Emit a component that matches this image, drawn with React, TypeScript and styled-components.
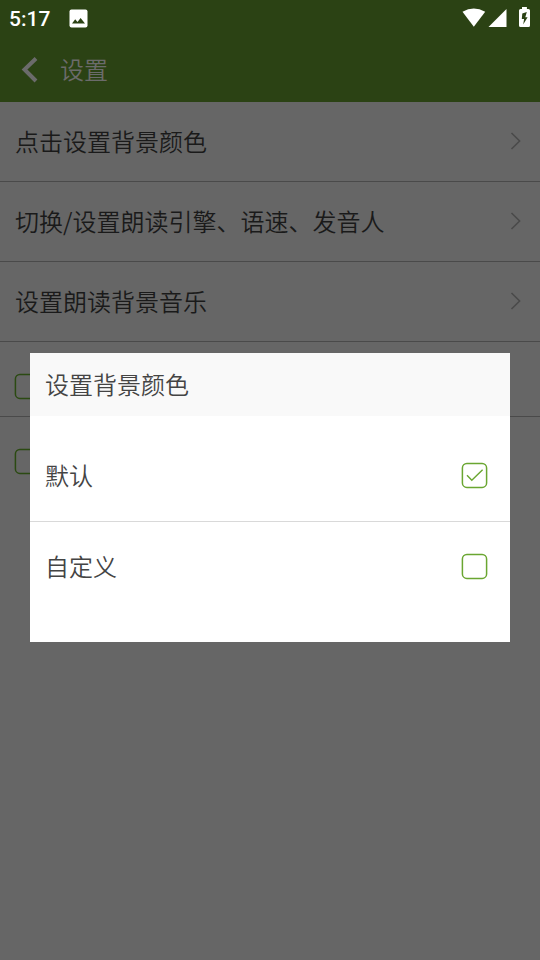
import React from "react";
import styled, { createGlobalStyle } from "styled-components";

const GlobalStyle = createGlobalStyle`
  * { box-sizing: border-box; }
  html, body { margin: 0; background: #666666; }
  body { font-family: "Noto Sans CJK SC DemiLight", "Noto Sans CJK SC", sans-serif; font-weight: 350; font-size: 24px; line-height: 36px; overflow: hidden; }
  svg { display: block; flex: none; }
`;

const Screen = styled.div`
  width: 540px;
  height: 960px;
  background: #666666;
`;

const TopBar = styled.header`
  height: 102px;
  background: #2b4214;
`;

const StatusBar = styled.div`
  height: 38px;
  padding: 0 9px 0 9px;
  display: flex;
  align-items: center;
  color: #ffffff;
`;

const Clock = styled.span`
  width: 60px;
  font-family: Roboto, sans-serif;
  font-size: 21px;
  font-weight: 500;
  line-height: 38px;
`;

const StatusIcons = styled.div`
  margin-left: auto;
  display: flex;
  align-items: center;
  height: 36px;
  align-self: flex-start;
`;

const PictureIcon = styled.svg`
  margin-bottom: 1px;
`;

const TitleBar = styled.div`
  height: 64px;
  padding-left: 21px;
  display: flex;
  align-items: center;
  gap: 21px;
  color: #6b6b6b;
`;

const Label = styled.span`
  padding-bottom: 2px;
`;

const Title = styled(Label)`
  padding-bottom: 3px;
`;

const SettingRow = styled.div<{ $height: number; $last?: boolean }>`
  height: ${(p) => p.$height}px;
  padding: 0 18px 0 15px;
  border-bottom: ${(p) => (p.$last ? "none" : "1px solid #4a4a4a")};
  display: flex;
  align-items: center;
  justify-content: space-between;
  color: #1a1a1a;
`;

const CheckRow = styled(SettingRow)`
  align-items: flex-start;
  padding-top: ${(p) => p.$height - 44}px;
  padding-left: 14px;
`;

const Chevron = styled.svg`
  margin-bottom: 1px;
`;

const Backdrop = styled.div`
  position: fixed;
  top: 353px;
  left: 0;
  width: 540px;
  padding: 0 30px;
`;

const Dialog = styled.section`
  height: 289px;
  background: #ffffff;
  color: #444444;
`;

const DialogTitle = styled.div`
  height: 63px;
  padding: 0 15px 0 15px;
  display: flex;
  align-items: center;
  background: #f9f9f9;
`;

const OptionList = styled.div`
  padding-top: 14px;
`;

const Option = styled.div<{ $divided?: boolean }>`
  height: ${(p) => (p.$divided ? 92 : 89)}px;
  padding: 0 22px 0 15px;
  border-bottom: ${(p) => (p.$divided ? "1px solid #d9d9d9" : "none")};
  display: flex;
  align-items: center;
  justify-content: space-between;
`;

const CheckBox = ({ checked, color }: { checked?: boolean; color: string }) => (
  <svg width="27" height="27" viewBox="0 0 27 27" fill="none" stroke={color}>
    <rect x="1.4" y="1.4" width="24.2" height="24" rx="4.5" strokeWidth="1.5" />
    {checked && <path d="M6 13.2L10.8 18.3L21.6 7.8" strokeWidth="1.4" />}
  </svg>
);

const rows = ["点击设置背景颜色", "切换/设置朗读引擎、语速、发音人", "设置朗读背景音乐"];

export default function App() {
  return (
    <>
      <GlobalStyle />
      <Screen>
        <TopBar>
          <StatusBar>
            <Clock>5:17</Clock>
            <PictureIcon width="19" height="19" viewBox="0 0 19 19">
              <rect x="0.5" y="0.5" width="18" height="18" rx="2" fill="#fff" />
              <path d="M3 14.5L6.2 10.3L8.5 13L11.6 9L16 14.5Z" fill="#2b4214" />
            </PictureIcon>
            <StatusIcons>
              <svg width="69" height="22" viewBox="0 0 69 22" fill="#fff">
                <path d="M0.5 4.5Q11.8-2.2 23.2 4.5L11.8 19.5Z" transform="translate(0 .3)" />
                <path d="M26.5 20H44.5V2Z" />
                <path d="M60 2V.1H64.9V2H66.5Q68 2 68 3.5V18.5Q68 20 66.5 20H58.5Q57 20 57 18.5V3.5Q57 2 58.5 2Z" />
                <path d="M64.8 5L60.3 6.4L59.8 12H62.1L61.2 17.6L65.6 10.2H63.3Z" fill="#2b4214" />
              </svg>
            </StatusIcons>
          </StatusBar>
          <TitleBar>
            <svg width="18" height="26" viewBox="0 0 18 26" fill="none" stroke="#6b6b6b" strokeWidth="4">
              <path d="M15 1.5L3.5 12.5L15 24" />
            </svg>
            <Title>设置</Title>
          </TitleBar>
        </TopBar>
        {rows.map((label) => (
          <SettingRow key={label} $height={80}>
            <Label>{label}</Label>
            <Chevron width="12" height="18" viewBox="0 0 12 18" fill="none" stroke="#4a4a4a" strokeWidth="1.6">
              <path d="M1.5 1L9.6 9L1.5 17" />
            </Chevron>
          </SettingRow>
        ))}
        <CheckRow $height={75}>
          <CheckBox color="#2b4a12" />
        </CheckRow>
        <CheckRow $height={75} $last>
          <CheckBox color="#2b4a12" />
        </CheckRow>
      </Screen>
      <Backdrop>
        <Dialog>
          <DialogTitle>
            <Label>设置背景颜色</Label>
          </DialogTitle>
          <OptionList>
            <Option $divided>
              <Label>默认</Label>
              <CheckBox checked color="#6aa631" />
            </Option>
            <Option>
              <Label>自定义</Label>
              <CheckBox color="#6aa631" />
            </Option>
          </OptionList>
        </Dialog>
      </Backdrop>
    </>
  );
}
